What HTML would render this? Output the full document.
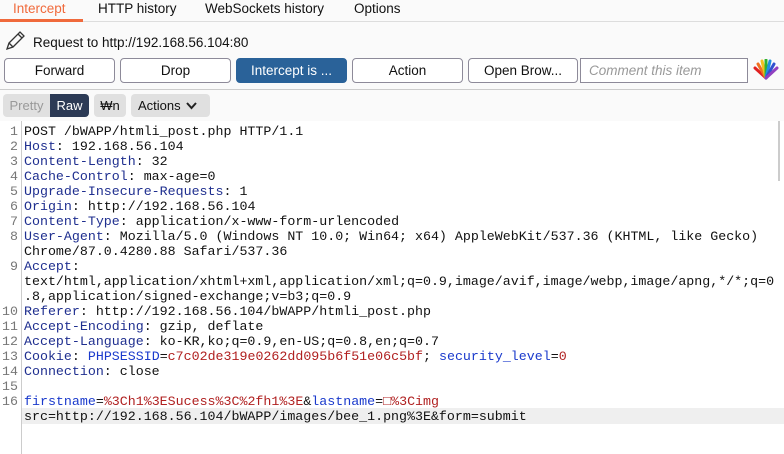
<!DOCTYPE html>
<html><head><meta charset="utf-8"><style>
*{box-sizing:border-box;margin:0;padding:0}
body{width:784px;height:454px;overflow:hidden;background:#fafafa;font-family:"Liberation Sans","Noto Sans CJK KR",sans-serif;font-size:13px;color:#111;position:relative}
.tabs{position:absolute;left:0;top:0;width:784px;height:22px;border-bottom:1px solid #ddd}
.tab{position:absolute;top:1px;font-size:13.5px}
.btn{position:absolute;top:58px;height:25px;border:1px solid #8d8a99;border-radius:4px;background:#fff;text-align:center;line-height:23px;font-size:13.5px}
.code{position:absolute;left:0;top:121px;width:784px;height:333px;background:#fff;font-family:"Liberation Mono",monospace;font-size:13.3px}
.row{position:absolute;left:0;height:15px;line-height:15px;white-space:pre}
.n{position:absolute;width:18px;text-align:right;color:#777}
.t{position:absolute;left:24px}
.k{color:#1f2f8f}.v{color:#b02020}.b{color:#1a3acc}
</style></head><body>
<div class="tabs">
<div class="tab" style="left:13px;color:#f06a3c">Intercept</div>
<div style="position:absolute;left:0;top:19px;width:83px;height:3px;background:#f06a3c"></div>
<div class="tab" style="left:98px">HTTP history</div>
<div class="tab" style="left:205px">WebSockets history</div>
<div class="tab" style="left:354px">Options</div>
</div>
<svg style="position:absolute;left:5px;top:31px" width="20" height="20" viewBox="0 0 20 20"><path d="M2 18 L4 12 L15 1 L19 5 L8 16 Z M4 12 L8 16 M13 3 L17 7" fill="none" stroke="#333" stroke-width="1.3"/></svg>
<div style="position:absolute;left:33px;top:35px;font-size:13.5px">Request to http://192.168.56.104:80</div>
<div class="btn" style="left:4px;width:111px">Forward</div>
<div class="btn" style="left:120px;width:111px">Drop</div>
<div class="btn" style="left:236px;width:111px;background:#2a6299;color:#fff;border-color:#2a6299">Intercept is ...</div>
<div class="btn" style="left:352px;width:111px">Action</div>
<div class="btn" style="left:468px;width:110px">Open Brow...</div>
<div style="position:absolute;left:580px;top:58px;width:168px;height:25px;border:1px solid #8d8a99;background:#fff;color:#999;font-style:italic;padding-left:8px;line-height:23px;font-size:13.5px">Comment this item</div>
<svg style="position:absolute;left:753px;top:59px" width="26" height="22" viewBox="0 0 26 22"><g stroke-width="3" stroke-linecap="round"><path d="M13 19 L2 9" stroke="#e02020"/><path d="M13 19 L5 5" stroke="#f07020"/><path d="M13 19 L9 2" stroke="#f0c020"/><path d="M13 19 L13 1" stroke="#30b030"/><path d="M13 19 L17 2" stroke="#2090e0"/><path d="M13 19 L21 5" stroke="#3050d0"/><path d="M13 19 L24 9" stroke="#9040c0"/></g></svg>
<div style="position:absolute;left:0;top:89px;width:784px;height:1px;background:#ccc"></div>
<div style="position:absolute;left:3px;top:94px;width:47px;height:23px;background:#e0e0e0;border-radius:4px 0 0 4px;color:#999;text-align:center;line-height:23px">Pretty</div>
<div style="position:absolute;left:50px;top:94px;width:39px;height:23px;background:#2c3a55;border-radius:0 4px 4px 0;color:#fff;text-align:center;line-height:23px">Raw</div>
<div style="position:absolute;left:94px;top:94px;width:32px;height:23px;background:#e0e0e0;border-radius:4px;text-align:center;line-height:23px">₩n</div>
<div style="position:absolute;left:131px;top:94px;width:79px;height:23px;background:#e0e0e0;border-radius:4px;padding-left:7px;line-height:23px">Actions <svg width="11" height="8" viewBox="0 0 11 8" style="margin-left:2px"><path d="M1 1 L5.5 6 L10 1" fill="none" stroke="#222" stroke-width="2"/></svg></div>
<div class="code">
<div style="position:absolute;left:21px;top:0;width:1px;height:333px;background:#ccc"></div>
<div style="position:absolute;left:22px;top:287px;width:762px;height:16px;background:#efefef"></div>
<div style="position:absolute;left:778px;top:0;width:2px;height:60px;background:#ccc"></div>
<div class="row" style="top:3px"><span class="n">1</span><span class="t">POST /bWAPP/htmli_post.php HTTP/1.1</span></div>
<div class="row" style="top:18px"><span class="n">2</span><span class="t"><span class="k">Host</span>: 192.168.56.104</span></div>
<div class="row" style="top:33px"><span class="n">3</span><span class="t"><span class="k">Content-Length</span>: 32</span></div>
<div class="row" style="top:48px"><span class="n">4</span><span class="t"><span class="k">Cache-Control</span>: max-age=0</span></div>
<div class="row" style="top:63px"><span class="n">5</span><span class="t"><span class="k">Upgrade-Insecure-Requests</span>: 1</span></div>
<div class="row" style="top:78px"><span class="n">6</span><span class="t"><span class="k">Origin</span>: http://192.168.56.104</span></div>
<div class="row" style="top:93px"><span class="n">7</span><span class="t"><span class="k">Content-Type</span>: application/x-www-form-urlencoded</span></div>
<div class="row" style="top:108px"><span class="n">8</span><span class="t"><span class="k">User-Agent</span>: Mozilla/5.0 (Windows NT 10.0; Win64; x64) AppleWebKit/537.36 (KHTML, like Gecko)</span></div>
<div class="row" style="top:123px"><span class="t">Chrome/87.0.4280.88 Safari/537.36</span></div>
<div class="row" style="top:138px"><span class="n">9</span><span class="t"><span class="k">Accept</span>:</span></div>
<div class="row" style="top:153px"><span class="t">text/html,application/xhtml+xml,application/xml;q=0.9,image/avif,image/webp,image/apng,*/*;q=0</span></div>
<div class="row" style="top:168px"><span class="t">.8,application/signed-exchange;v=b3;q=0.9</span></div>
<div class="row" style="top:183px"><span class="n">10</span><span class="t"><span class="k">Referer</span>: http://192.168.56.104/bWAPP/htmli_post.php</span></div>
<div class="row" style="top:198px"><span class="n">11</span><span class="t"><span class="k">Accept-Encoding</span>: gzip, deflate</span></div>
<div class="row" style="top:213px"><span class="n">12</span><span class="t"><span class="k">Accept-Language</span>: ko-KR,ko;q=0.9,en-US;q=0.8,en;q=0.7</span></div>
<div class="row" style="top:228px"><span class="n">13</span><span class="t"><span class="k">Cookie</span>: <span class="b">PHPSESSID</span>=<span class="v">c7c02de319e0262dd095b6f51e06c5bf</span>; <span class="b">security_level</span>=<span class="v">0</span></span></div>
<div class="row" style="top:243px"><span class="n">14</span><span class="t"><span class="k">Connection</span>: close</span></div>
<div class="row" style="top:258px"><span class="n">15</span></div>
<div class="row" style="top:273px"><span class="n">16</span><span class="t"><span class="b">firstname</span>=<span class="v">%3Ch1%3ESucess%3C%2fh1%3E</span>&amp;<span class="b">lastname</span>=<span class="v">□%3Cimg</span></span></div>
<div class="row" style="top:288px"><span class="t">src=http://192.168.56.104/bWAPP/images/bee_1.png%3E&amp;form=submit</span></div>
</div>
</body></html>
